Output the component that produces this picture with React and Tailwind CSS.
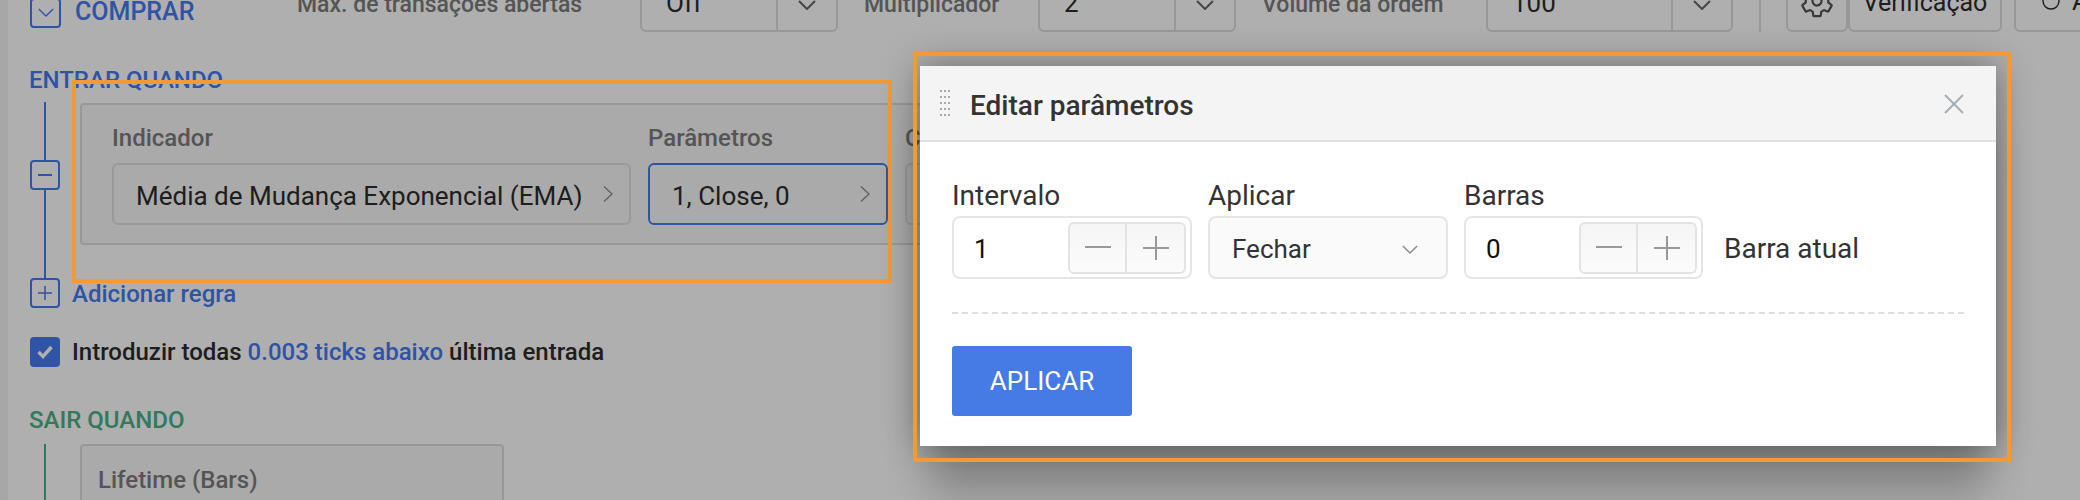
import React from 'react'
import { IoSettingsOutline } from 'react-icons/io5'

const font = { fontFamily: 'Roboto, sans-serif' }

const Chevron = ({ className, weight = '1.5' }) => (
    <svg viewBox="0 0 18 10" fill="none" stroke="currentColor" className={className}>
        <polyline points="1,1 9,9 17,1" strokeWidth={weight} />
    </svg>
)

const ChevronRight = () => (
    <svg viewBox="0 0 10 16" fill="none" stroke="currentColor" className="w-[10px] h-[16px] text-[#8a8a8a]">
        <polyline points="1,0.5 9,8 1,15.5" strokeWidth="1.3" />
    </svg>
)

const TopSelect = ({ value, width }) => (
    <div className={`flex h-[62px] shrink-0 border-2 border-[#dedede] rounded-md bg-white ${width}`}>
        <div className="flex-1 flex items-center pl-[24px] pt-[4px] text-[26px] text-[#2c2c2c]">{value}</div>
        <div className="w-[60px] border-l-2 border-[#dedede] flex items-center justify-center pt-[8px]">
            <Chevron weight="2" className="w-[18px] h-[10px] text-[#666666]" />
        </div>
    </div>
)

const ParamField = ({ text, className }) => (
    <div className={`flex items-center justify-between h-[62px] rounded-md border-2 ${className}`}>
        <span className="text-[26px] text-[#2c2c2c] whitespace-nowrap pt-[4px]">{text}</span>
        <ChevronRight />
    </div>
)

const Stepper = () => (
    <div className="flex w-[118px] h-[52px] shrink-0 border-2 border-[#e3e3e3] rounded-md bg-gradient-to-b from-[#f5f5f5] to-[#fcfcfc]">
        <div className="w-[57px] border-r-2 border-[#e3e3e3] flex items-center justify-center">
            <div className="w-[26px] h-[2px] bg-[#999999] -mt-[1px]"></div>
        </div>
        <div className="flex-1 flex items-center justify-center">
            <svg viewBox="0 0 26 26" className="w-[26px] h-[26px] text-[#999999]" stroke="currentColor" strokeWidth="2">
                <line x1="0" y1="13" x2="26" y2="13" />
                <line x1="13" y1="1" x2="13" y2="25" />
            </svg>
        </div>
    </div>
)

const NumberField = ({ label, value, width }) => (
    <div className={width}>
        <div className="h-[36px] leading-[36px] mb-[4px] pt-[2px] text-[28px] text-[#333333]">{label}</div>
        <div className="flex items-center justify-between h-[63px] border-2 border-[#e5e5e5] rounded-lg bg-white pl-[20px] pr-[4px]">
            <span className="text-[26px] text-[#111111] pt-[3px]">{value}</span>
            <Stepper />
        </div>
    </div>
)

const App = () => {
    return (
        <div className="relative h-[500px] w-[2080px] overflow-hidden bg-white flex" style={font}>
            {/* page under the dialog */}
            <div className="w-[8px] bg-[#f3f3f3] shrink-0"></div>
            <div className="flex-1 min-w-0 pl-[22px]">
                <div className="flex items-center h-[62px] -mt-[30px]">
                    <div className="self-start flex items-center mt-[25px] w-[267px] shrink-0">
                        <div className="w-[31px] h-[30px] shrink-0 border-2 border-[#4579f0] rounded-[4px] flex items-center justify-center">
                            <Chevron className="w-[16px] h-[9px] text-[#4579f0]" />
                        </div>
                        <span className="ml-[14px] -mt-[2px] text-[25px] font-medium text-[#4579f0]">COMPRAR</span>
                    </div>
                    <span className="w-[343px] pt-[8px] text-[23px] font-medium text-[#7c7c7c] shrink-0 whitespace-nowrap">Máx. de transações abertas</span>
                    <TopSelect value="Off" width="w-[198px]" />
                    <span className="ml-[26px] w-[174px] pt-[8px] text-[23px] font-medium text-[#7c7c7c] shrink-0">Multiplicador</span>
                    <TopSelect value="2" width="w-[198px]" />
                    <span className="ml-[26px] w-[224px] pt-[8px] text-[23px] font-medium text-[#7c7c7c] shrink-0 whitespace-nowrap">Volume da ordem</span>
                    <TopSelect value="100" width="w-[247px]" />
                    <div className="ml-[26px] w-[2px] h-[62px] shrink-0 bg-[#dedede]"></div>
                    <div className="ml-[25px] w-[62px] h-[62px] shrink-0 border-2 border-[#dedede] rounded-md flex items-center justify-center">
                        <IoSettingsOutline className="w-[36px] h-[36px] text-[#555555]" />
                    </div>
                    <div className="w-[154px] h-[62px] shrink-0 border-2 border-[#dedede] rounded-md flex items-center justify-center pt-[4px] text-[25px] text-[#2c2c2c]">Verificação</div>
                    <div className="ml-[12px] w-[120px] h-[62px] shrink-0 border-2 border-[#dedede] rounded-md flex items-center pl-[26px] gap-[12px] text-[26px] text-[#2c2c2c]">
                        <svg viewBox="0 0 18 18" fill="none" stroke="currentColor" className="w-[18px] h-[18px] shrink-0" strokeWidth="1.4">
                            <circle cx="9" cy="9" r="8" />
                            <line x1="9" y1="3" x2="9" y2="8" />
                        </svg>
                        Alertas
                    </div>
                </div>

                <div className="mt-[34px] h-[28px] leading-[28px] -ml-[1px] text-[24px] font-medium text-[#4579f0]">ENTRAR QUANDO</div>

                <div className="mt-[8px] flex h-[176px]">
                    <div className="w-[30px] flex flex-col items-center shrink-0">
                        <div className="w-[2px] h-[58px] bg-[#4579f0]"></div>
                        <div className="w-[30px] h-[30px] border-2 border-[#4579f0] rounded-[4px] flex items-center justify-center">
                            <div className="w-[14px] h-[2px] bg-[#4579f0]"></div>
                        </div>
                        <div className="w-[2px] flex-1 bg-[#4579f0]"></div>
                    </div>
                    <div className="ml-[20px] mt-[1px] w-[1800px] h-[142px] border-2 border-[#dedede] rounded-[4px] bg-[#f8f8f8] pl-[30px] pt-[19px]">
                        <div className="flex gap-[17px]">
                            <div className="w-[519px]">
                                <div className="h-[28px] leading-[28px] mb-[11px] text-[24px] font-medium text-[#7c7c7c]">Indicador</div>
                                <ParamField text="Média de Mudança Exponencial (EMA)" className="bg-[#f8f8f8] border-[#e0e0e0] pl-[22px] pr-[16px]" />
                            </div>
                            <div className="w-[240px]">
                                <div className="h-[28px] leading-[28px] mb-[11px] text-[24px] font-medium text-[#7c7c7c]">Parâmetros</div>
                                <ParamField text="1, Close, 0" className="bg-[#f8f8f8] border-[#4579f0] pl-[22px] pr-[16px]" />
                            </div>
                            <div className="w-[300px]">
                                <div className="h-[28px] leading-[28px] mb-[11px] text-[24px] font-medium text-[#7c7c7c]">Condição</div>
                                <ParamField text="" className="bg-[#f8f8f8] border-[#e0e0e0] pl-[22px] pr-[16px]" />
                            </div>
                        </div>
                    </div>
                </div>

                <div className="flex items-center h-[30px]">
                    <div className="w-[30px] h-[30px] border-2 border-[#4579f0] rounded-[4px] flex items-center justify-center">
                        <svg viewBox="0 0 16 16" className="w-[16px] h-[16px] text-[#4579f0]" stroke="currentColor" strokeWidth="1.5">
                            <line x1="1" y1="8" x2="15" y2="8" />
                            <line x1="8" y1="1" x2="8" y2="15" />
                        </svg>
                    </div>
                    <span className="ml-[12px] pt-[2px] text-[24px] font-medium text-[#4579f0]">Adicionar regra</span>
                </div>

                <div className="mt-[29px] flex items-center h-[30px]">
                    <div className="w-[30px] h-[30px] rounded-[4px] bg-[#4579f0] flex items-center justify-center">
                        <svg viewBox="0 0 16 14" fill="none" stroke="#ffffff" strokeWidth="3.5" className="w-[16px] h-[14px]">
                            <polyline points="1.5,7 6,11.5 14.5,2" />
                        </svg>
                    </div>
                    <span className="ml-[12px] text-[24px] font-medium text-[#2c2c2c] whitespace-nowrap">
                        Introduzir todas <span className="text-[#4579f0]">0.003 ticks abaixo</span> última entrada
                    </span>
                </div>

                <div className="mt-[39px] h-[28px] leading-[28px] -ml-[1px] text-[24px] font-medium text-[#4db08a]">SAIR QUANDO</div>

                <div className="mt-[10px] flex">
                    <div className="w-[30px] flex justify-center shrink-0">
                        <div className="w-[2px] h-[100px] bg-[#4db08a]"></div>
                    </div>
                    <div className="ml-[20px] w-[424px] h-[100px] border-2 border-[#dedede] rounded-[4px] bg-[#f8f8f8] pl-[16px] pt-[20px]">
                        <div className="text-[24px] font-medium text-[#7c7c7c] leading-[28px]">Lifetime (Bars)</div>
                    </div>
                </div>
            </div>

            {/* dim layer */}
            <div className="absolute inset-0 bg-black/[0.314]"></div>

            {/* highlight round the parameter field */}
            <div className="absolute left-[72px] top-[80px] w-[820px] h-[203px] border-4 border-[#f39a35]"></div>

            {/* dialog */}
            <div className="absolute left-[920px] top-[66px] w-[1076px] h-[380px] bg-white flex flex-col shadow-[0_0_35px_rgba(0,0,0,0.4),0_60px_40px_-10px_rgba(0,0,0,0.22)]">
                <div className="h-[76px] shrink-0 flex items-center justify-between bg-[#f4f4f4] border-b-2 border-[#e0e0e0] pl-[20px] pr-[32px]">
                    <div className="flex items-center">
                        <div className="grid grid-cols-3 gap-x-[2px] gap-y-[4px] w-[10px]">
                            {Array.from({ length: 15 }).map((_, i) => (
                                <div key={i} className="w-[2px] h-[2px] bg-[#aaaaaa]"></div>
                            ))}
                        </div>
                        <span className="ml-[20px] pt-[6px] text-[28px] font-medium text-[#333333]">Editar parâmetros</span>
                    </div>
                    <svg viewBox="0 0 20 20" className="w-[20px] h-[20px] mt-[2px] text-[#a5adb4]" stroke="currentColor" strokeWidth="2">
                        <line x1="1" y1="1" x2="19" y2="19" />
                        <line x1="19" y1="1" x2="1" y2="19" />
                    </svg>
                </div>
                <div className="flex-1 px-[32px] pt-[34px]">
                    <div className="flex items-end">
                        <NumberField label="Intervalo" value="1" width="w-[240px]" />
                        <div className="w-[240px] ml-[16px]">
                            <div className="h-[36px] leading-[36px] mb-[4px] pt-[2px] text-[28px] text-[#333333]">Aplicar</div>
                            <div className="flex items-center justify-between h-[63px] border-2 border-[#e5e5e5] rounded-lg bg-[#fafafa] pl-[22px] pr-[28px]">
                                <span className="text-[26px] text-[#333333] pt-[3px]">Fechar</span>
                                <Chevron className="w-[16px] h-[9px] text-[#888888] mt-[4px]" />
                            </div>
                        </div>
                        <NumberField label="Barras" value="0" width="w-[239px] ml-[16px]" />
                        <div className="ml-[21px] h-[63px] flex items-center pt-[2px] text-[28px] text-[#333333]">Barra atual</div>
                    </div>
                    <div className="mt-[33px] border-t-2 border-dashed border-[#dcdee2]"></div>
                    <button className="mt-[32px] w-[180px] h-[70px] rounded-[3px] bg-[#467be6] text-white text-[26px]">APLICAR</button>
                </div>
            </div>

            <div className="absolute left-[913px] top-[52px] w-[1098px] h-[410px] border-4 border-[#f39a35]"></div>
        </div>
    )
}

export default App
